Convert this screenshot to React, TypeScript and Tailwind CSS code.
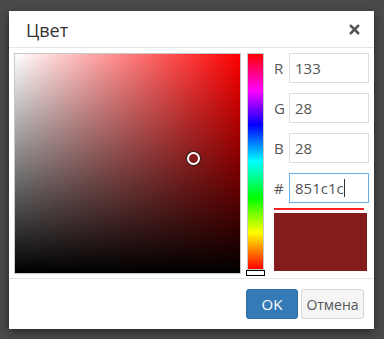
import { X } from "lucide-react";

const fields = [
  { label: "R", value: "133" },
  { label: "G", value: "28" },
  { label: "B", value: "28" },
];

function ColorArea() {
  return (
    <div className="relative w-[227px] h-[221px] border border-[#c8c8c8] bg-[#ff0000]">
      <div className="absolute inset-0 bg-[linear-gradient(to_right,#ffffff,rgba(255,255,255,0))]" />
      <div className="absolute inset-0 bg-[linear-gradient(to_bottom,rgba(0,0,0,0),#000000)]" />
      {/* picker marker */}
      <div className="absolute left-[172px] top-[98px] w-[13px] h-[13px] rounded-full border-2 border-white ring-1 ring-[#222]" />
    </div>
  );
}

function HueBar() {
  return (
    <div className="relative w-[17px] h-[223px]">
      <div className="w-[17px] h-[217px] border border-[#c8c8c8] bg-[linear-gradient(to_bottom,#ff0000_0%,#ff00ff_17%,#0000ff_33%,#00ffff_50%,#00ff00_67%,#ffff00_83%,#ff0000_100%)]" />
      <div className="absolute left-[-1px] top-[217px] w-[19px] h-[6px] bg-white border border-black" />
    </div>
  );
}

export default function App() {
  return (
    <div
      className="w-[384px] h-[339px] bg-[#4a4a4a] pt-[11px] pl-[9px] overflow-hidden"
      style={{ fontFamily: "'Open Sans', 'Noto Sans', sans-serif" }}
    >
      <div className="w-[365px] h-[318px] bg-white shadow-[0_3px_9px_rgba(0,0,0,0.5)] flex flex-col">
        {/* Header */}
        <div className="h-[37px] border-b border-[#e5e5e5] flex items-center justify-between pl-[17px] pr-[12px]">
          <h4 className="text-[18px] text-[#333] leading-none pt-[2px]">Цвет</h4>
          <X className="w-[15px] h-[15px] text-[#555]" strokeWidth={4} />
        </div>

        {/* Body */}
        <div className="h-[231px] border-b border-[#e5e5e5] flex pl-[5px] pt-[5px]">
          <ColorArea />
          <div className="ml-[6px]">
            <HueBar />
          </div>
          <div className="ml-[10px] w-[95px] flex flex-col">
            {fields.map((f) => (
              <div key={f.label} className="flex items-center h-[30px] mb-[10px]">
                <span className="w-[15px] text-[15px] text-[#555]">{f.label}</span>
                <div className="w-[80px] h-[30px] border border-[#ddd] flex items-center pl-[5px] text-[15px] text-[#555]">
                  {f.value}
                </div>
              </div>
            ))}
            <div className="flex items-center h-[30px]">
              <span className="w-[15px] text-[15px] text-[#555]">#</span>
              <div className="w-[80px] h-[30px] border border-[#66afe9] flex items-center pl-[5px] text-[15px] text-[#555]">
                851c1c
                <span className="w-px h-[18px] bg-[#333]" />
              </div>
            </div>
            <div className="mt-[5px] w-[90px] h-[2px] bg-[#ff2020]" />
            <div className="mt-[3px] w-[93px] h-[58px] bg-[#851c1c]" />
          </div>
        </div>

        {/* Footer */}
        <div className="flex-1 flex items-center justify-end gap-[3px] pr-[10px]">
          <button className="w-[52px] h-[30px] rounded-[3px] bg-[#337ab7] border border-[#2e6da4] text-white text-[15px]">
            OK
          </button>
          <button className="w-[63px] h-[30px] rounded-[3px] bg-[#f5f5f5] border border-[#d5d5d5] text-[#555] text-[14px]">
            Отмена
          </button>
        </div>
      </div>
    </div>
  );
}
